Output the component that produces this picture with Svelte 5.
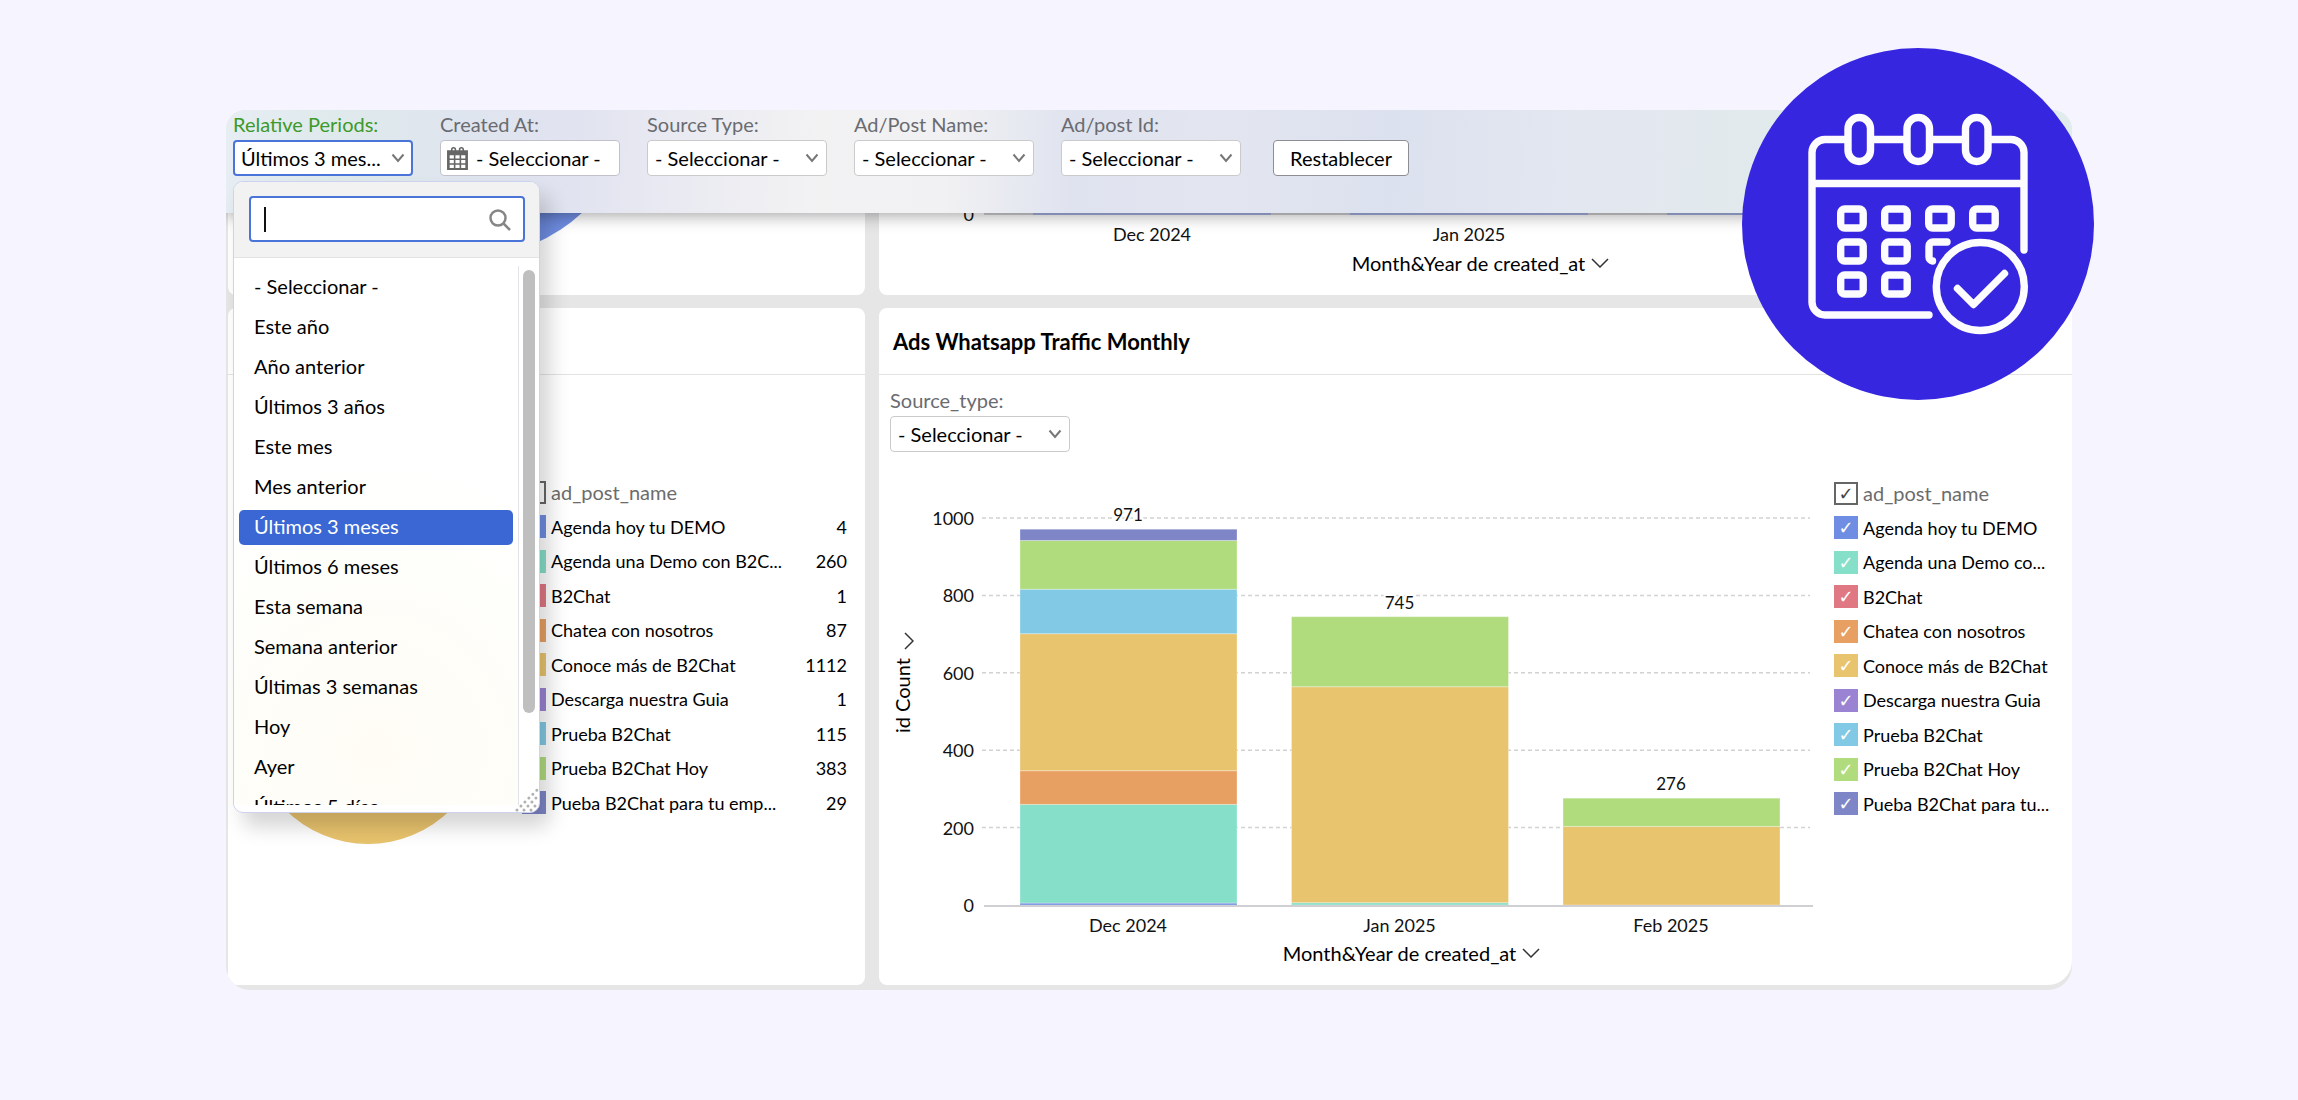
<script>
  const filters = [
    { id: 'relative', label: 'Relative Periods:', value: 'Últimos 3 mes...', active: true },
    { id: 'created', label: 'Created At:', value: '- Seleccionar -', calendar: true },
    { id: 'source', label: 'Source Type:', value: '- Seleccionar -' },
    { id: 'adname', label: 'Ad/Post Name:', value: '- Seleccionar -' },
    { id: 'adid', label: 'Ad/post Id:', value: '- Seleccionar -' },
  ];

  const periods = [
    '- Seleccionar -', 'Este año', 'Año anterior', 'Últimos 3 años', 'Este mes', 'Mes anterior',
    'Últimos 3 meses', 'Últimos 6 meses', 'Esta semana', 'Semana anterior', 'Últimas 3 semanas',
    'Hoy', 'Ayer', 'Últimos 5 días',
  ];
  let selected = $state('Últimos 3 meses');
  let query = $state('');

  // `wide` and `narrow` are the shortened names for the two legend widths
  const series = [
    { name: 'Agenda hoy tu DEMO', total: 4, key: 'c0' },
    { wide: 'Agenda una Demo con B2C...', narrow: 'Agenda una Demo co...', total: 260, key: 'c1' },
    { name: 'B2Chat', total: 1, key: 'c2' },
    { name: 'Chatea con nosotros', total: 87, key: 'c3' },
    { name: 'Conoce más de B2Chat', total: 1112, key: 'c4' },
    { name: 'Descarga nuestra Guia', total: 1, key: 'c5' },
    { name: 'Prueba B2Chat', total: 115, key: 'c6' },
    { name: 'Prueba B2Chat Hoy', total: 383, key: 'c7' },
    { wide: 'Pueba B2Chat para tu emp...', narrow: 'Pueba B2Chat para tu...', total: 29, key: 'c8' },
  ];

  const months = [
    { label: 'Dec 2024', parts: [['c0', 5], ['c1', 255], ['c3', 87], ['c4', 354], ['c6', 115], ['c7', 126], ['c8', 29]] },
    { label: 'Jan 2025', parts: [['c1', 6], ['c4', 558], ['c7', 181]] },
    { label: 'Feb 2025', parts: [['c4', 203], ['c7', 73]] },
  ];

  const baseY = 415;
  const scale = 0.387;
  const bars = months.map((m, i) => {
    let sum = 0;
    const segs = m.parts.map(([key, v]) => {
      sum += v;
      return { key, y: baseY - sum * scale, h: v * scale };
    });
    return { label: m.label, total: sum, x: 96 + i * 271.5, segs, top: baseY - sum * scale };
  });
  const ticks = [1000, 800, 600, 400, 200];
</script>

{#snippet chevron()}
  <svg class="chev" viewBox="0 0 14 10" aria-hidden="true"><path d="M1.5 1.5 7 8 12.5 1.5" /></svg>
{/snippet}

{#snippet axisName()}
  <button class="axis-name" type="button">
    Month&amp;Year de created_at
    <svg viewBox="0 0 18 10" aria-hidden="true"><path d="M1 1 9 9 17 1" /></svg>
  </button>
{/snippet}

<main class="page">
  <div class="stage">
    <section class="board">
      <header class="filters">
        {#each filters as f (f.id)}
          <div class="field">
            <label for={f.id} class:green={f.active}>{f.label}</label>
            <div class="control">
              {#if f.calendar}
                <button id={f.id} class="box date" type="button">
                  <svg class="cal" viewBox="0 0 20 22" aria-hidden="true">
                    <path d="M0 3h20v19H0z" fill="#666" />
                    <path d="M4.5 5V2.500a1.500 1.500 0 0 1 3.500 0V5M12 5V2.500a1.500 1.500 0 0 1 3.500 0V5" fill="none" stroke="#666" stroke-width="1.500" />
                    <path d="M2.500 8h4v3h-4zM8 8h4v3H8zM13.500 8h4v3h-4zM2.500 12.500h4v3h-4zM8 12.500h4v3H8zM13.500 12.500h4v3h-4zM2.500 17h4v3h-4zM8 17h4v3H8zM13.500 17h4v3h-4z" fill="#fff" />
                  </svg>
                  {f.value}
                </button>
              {:else}
                <select id={f.id} class="box" class:active={f.active}><option>{f.value}</option></select>
                {@render chevron()}
              {/if}
            </div>
            {#if f.active}
              <div class="menu">
                <div class="search">
                  <input type="text" aria-label="Buscar" bind:value={query} />
                  <i class="caret"></i>
                  <svg viewBox="0 0 22 22" aria-hidden="true"><circle cx="9" cy="9" r="7.500" /><path d="M14.500 14.500 21 21" /></svg>
                </div>
                <div class="scroller">
                  <ul role="listbox" aria-label="Relative Periods">
                    {#each periods as p}
                      <li role="option" aria-selected={p === selected}>
                        <button type="button" class:on={p === selected} onclick={() => (selected = p)}>{p}</button>
                      </li>
                    {/each}
                  </ul>
                  <div class="track"><div class="thumb"></div></div>
                </div>
                <svg class="grip" viewBox="0 0 24 24" aria-hidden="true">
                  <path d="M2 22 22 2M9 22 22 9M16 22 22 16" />
                </svg>
              </div>
            {/if}
          </div>
        {/each}
        <button class="reset" type="button">Restablecer</button>
      </header>

      <div class="tiles">
        <article class="tile">
          <svg class="pie-top" viewBox="0 0 637 82" preserveAspectRatio="xMinYMin" aria-hidden="true">
            <circle cx="242" cy="-120" r="164" />
          </svg>
        </article>

        <article class="tile upper">
          <svg viewBox="0 0 1193 36" preserveAspectRatio="xMinYMin" aria-hidden="true">
            <text class="tick" x="95" y="8">0</text>
            <path class="base" d="M105 1H1080" />
            <path class="topbars" d="M154 0h238v2H154zM471 0h238v2H471zM788 0h238v2H788z" />
            <text class="month" x="273" y="28">Dec 2024</text>
            <text class="month" x="590" y="28">Jan 2025</text>
            <text class="month" x="907" y="28">Feb 2025</text>
          </svg>
          {@render axisName()}
        </article>

        <article class="tile lower">
          <h2>&nbsp;</h2>
          <div class="pie-body">
            <svg class="pie" viewBox="0 0 234 234" aria-hidden="true"><circle cx="117" cy="117" r="117" /></svg>
            <ul class="legend totals">
              <li class="head"><label><input type="checkbox" checked /><span>ad_post_name</span></label></li>
              {#each series as s}
                <li><label><input type="checkbox" class={s.key} checked /><span>{s.name ?? s.wide}</span></label><b>{s.total}</b></li>
              {/each}
            </ul>
          </div>
        </article>

        <article class="tile lower">
          <h2>Ads Whatsapp Traffic Monthly</h2>
          <div class="field inner">
            <label for="source-inner">Source_type:</label>
            <div class="control">
              <select id="source-inner" class="box"><option>- Seleccionar -</option></select>
              {@render chevron()}
            </div>
          </div>
          <div class="chart-row">
            <button class="y-name" type="button">
              id Count
              <svg viewBox="0 0 10 18" aria-hidden="true"><path d="M9 1 1 9 9 17" /></svg>
            </button>
            <div class="plot">
              <svg viewBox="0 0 910 446" role="img" aria-label="Ads Whatsapp Traffic Monthly">
                {#each ticks as t}
                  <path class="grid" d="M58 {baseY - t * scale}H886" />
                  <text class="tick" x="50" y={baseY - t * scale + 7}>{t}</text>
                {/each}
                <text class="tick" x="50" y={baseY + 7}>0</text>
                {#each bars as b}
                  {#each b.segs as s}
                    <rect class={s.key} x={b.x} y={s.y} width="217" height={s.h} />
                  {/each}
                  <text class="total" x={b.x + 108} y={b.top - 8}>{b.total}</text>
                  <text class="month" x={b.x + 108} y={baseY + 27}>{b.label}</text>
                {/each}
                <path class="base" d="M60 {baseY + 1}H889" />
              </svg>
              {@render axisName()}
            </div>
            <ul class="legend">
              <li class="head"><label><input type="checkbox" checked /><span>ad_post_name</span></label></li>
              {#each series as s}
                <li><label><input type="checkbox" class={s.key} checked /><span>{s.name ?? s.narrow}</span></label></li>
              {/each}
            </ul>
          </div>
        </article>
      </div>
    </section>

    <svg class="badge" viewBox="0 0 352 352" aria-hidden="true">
      <circle cx="176" cy="176" r="176" fill="#3626df" />
      <g fill="none" stroke="#fcfcff" stroke-width="7.400" stroke-linecap="round" stroke-linejoin="round">
        <path d="M102 91.500H83a13 13 0 0 0-13 13V254a13 13 0 0 0 13 13H187M132 91.500h29M191 91.500h29M249 91.500h20a13 13 0 0 1 13 13V202M70 135.500H282" />
        <rect x="106" y="69.500" width="22.500" height="44" rx="11.200" />
        <rect x="165" y="69.500" width="22.500" height="44" rx="11.200" />
        <rect x="223.500" y="69.500" width="22.500" height="44" rx="11.200" />
        <rect x="98.700" y="161" width="22.500" height="19" rx="4" /><rect x="142.700" y="161" width="22.500" height="19" rx="4" />
        <rect x="186.700" y="161" width="22.500" height="19" rx="4" /><rect x="230.700" y="161" width="22.500" height="19" rx="4" />
        <rect x="98.700" y="194" width="22.500" height="19" rx="4" /><rect x="142.700" y="194" width="22.500" height="19" rx="4" />
        <rect x="98.700" y="227" width="22.500" height="19" rx="4" /><rect x="142.700" y="227" width="22.500" height="19" rx="4" />
        <path d="M205 194h-14a4 4 0 0 0-4 4v11a4 4 0 0 0 3.500 4" />
        <circle cx="238.300" cy="238.500" r="44" />
        <path d="M215.500 240.500 231.500 256.500 262.500 225.500" />
      </g>
    </svg>
  </div>
</main>

<style>
  :global(body) { background: #f6f5ff; }
  .page {
    box-sizing: border-box;
    min-height: 100vh;
    padding: 110px 226px;
    font-family: Lato, sans-serif;
    font-size: 20px;
    line-height: 24px;
    color: #000;
    background: #f6f5ff;
  }
  .page *, .page *::before { box-sizing: border-box; }
  button, input, select { font: inherit; color: inherit; margin: 0; }
  ul { list-style: none; margin: 0; padding: 0; }
  .stage { position: relative; }
  .board { background: #e6e6e6; border-radius: 20px 20px 24px 24px; overflow: hidden; }

  .filters {
    position: relative;
    z-index: 2;
    display: flex;
    align-items: flex-start;
    gap: 27px;
    height: 103px;
    padding: 2px 7px 0;
    background: linear-gradient(92deg, #e6edf3 0%, #dfeaec 6%, #dfe5ef 13%, #e1e3f0 19%, #eaebf2 25%, #f2f2f3 32%, #f1f1f3 39%, #dfe3ef 46%, #e3e6f0 54%, #dce1ef 63%, #e3e7f0 73%, #e1eaec 84%, #e1ecec 100%);
    box-shadow: 0 2px 16px rgba(0, 0, 0, 0.38);
  }
  .field { position: relative; width: 180px; }
  .field > label { display: block; color: #6a6b70; line-height: 24px; margin-bottom: 4px; }
  .field > label.green { color: #3d9a2a; }
  .control { position: relative; }
  .box {
    display: block;
    width: 100%;
    height: 36px;
    padding: 0 30px 0 7px;
    border: 1px solid #cacaca;
    border-radius: 4px;
    background: #fff;
    appearance: none;
    text-align: left;
    white-space: nowrap;
  }
  .box.active { border: 2px solid #4a74d8; padding-left: 6px; }
  .date { display: flex; align-items: center; gap: 8px; padding: 0 6px; border-color: #c0c1cb; }
  .cal { width: 21px; height: 23px; flex: none; }
  .chev { position: absolute; right: 8px; top: 13px; width: 14px; height: 10px; pointer-events: none; }
  .chev path { fill: none; stroke: #777; stroke-width: 2; }
  .reset {
    height: 36px;
    width: 136px;
    margin: 28px 0 0 5px;
    padding: 0;
    border: 1px solid #8d8e93;
    border-radius: 4px;
    background: #fff;
  }

  .menu {
    position: absolute;
    z-index: 5;
    left: 0;
    top: 69px;
    width: 307px;
    height: 632px;
    display: flex;
    flex-direction: column;
    border: 1px solid #cdd2ee;
    border-radius: 10px;
    background: #fff;
    box-shadow: 10px 14px 20px rgba(0, 0, 0, 0.17);
    padding-bottom: 7px;
  }
  .search {
    position: relative;
    padding: 14px 14px 15px 15px;
    background: #f2f2f3;
    border-bottom: 1px solid #e3e3e6;
    border-radius: 9px 9px 0 0;
  }
  .search input {
    display: block;
    width: 100%;
    height: 46px;
    border: 2px solid #4a74d8;
    border-radius: 4px;
    background: #fff;
    padding: 0 44px 0 14px;
    outline: none;
  }
  .caret { position: absolute; left: 30px; top: 25px; width: 2px; height: 25px; background: #111; }
  .search svg { position: absolute; right: 28px; top: 27px; width: 22px; height: 22px; fill: none; stroke: #868686; stroke-width: 2.500; }
  .scroller { flex: 1; min-height: 0; display: flex; }
  .scroller ul {
    flex: 1;
    height: 100%;
    overflow: hidden;
    display: flex;
    flex-direction: column;
    gap: 5px;
    padding: 12px 5px 0;
    background: radial-gradient(circle at 50% 90%, #fffcf5, #fefefa 35%, #fff 60%);
  }
  .scroller li { flex: none; }
  .scroller li button {
    display: block;
    width: 100%;
    height: 35px;
    padding: 0 15px 3px;
    border: 0;
    border-radius: 5px;
    background: none;
    text-align: left;
  }
  .scroller li button.on { background: #3b67d4; color: #fff; }
  .track { width: 21px; margin-top: 8px; padding: 4px; border-left: 1px solid #e2e3ea; }
  .thumb { width: 12px; height: 443px; border-radius: 6px; background: #bfbfbf; }
  .grip { position: absolute; right: 0; bottom: 0; width: 24px; height: 24px; }
  .grip path { fill: none; stroke: #b0b0b0; stroke-width: 3; stroke-linecap: round; stroke-dasharray: 0 5.600; }

  .tiles {
    display: grid;
    grid-template-columns: 637fr 1193fr;
    grid-template-rows: 82px auto;
    gap: 13px 14px;
    padding: 0 0 5px 2px;
  }
  .tile { min-width: 0; background: #fff; border-radius: 8px; overflow: hidden; }
  .tile:nth-child(1), .tile:nth-child(2) { border-radius: 0 0 8px 8px; }
  .tile:last-child { border-radius: 8px 0 24px 8px; }
  .pie-top { display: block; width: 100%; }
  .pie-top circle { fill: #6f8de2; }
  .upper { text-align: center; }
  .upper svg { display: block; width: 100%; }
  .topbars { fill: #a5b2e2; }

  h2 {
    margin: 0;
    padding: 0 14px;
    height: 67px;
    line-height: 67px;
    font-size: 22px;
    font-weight: 700;
    color: #000;
    border-bottom: 1px solid #e3e3e3;
  }
  .lower { padding-bottom: 20px; }
  .inner { margin: 13px 0 0 11px; }
  .chart-row { display: flex; align-items: flex-start; margin-top: 23px; }
  .plot {
    flex: 1;
    min-width: 0;
    display: flex;
    flex-direction: column;
    align-items: center;
    margin: 15px 0 0 10px;
  }
  .plot > svg { display: block; width: 100%; }
  .plot rect { stroke: rgba(255, 255, 255, 0.3); stroke-width: 1; }
  .y-name {
    display: flex;
    align-items: center;
    gap: 8px;
    height: 102px;
    width: 24px;
    margin: 156px 0 0 11px;
    padding: 0;
    border: 0;
    background: none;
    writing-mode: vertical-rl;
    rotate: 180deg;
    white-space: nowrap;
  }
  .y-name svg { align-self: flex-end; width: 10px; height: 18px; fill: none; stroke: #333; stroke-width: 1.500; }
  .axis-name {
    display: inline-flex;
    align-items: center;
    gap: 6px;
    margin: 2px 0 0 10px;
    padding: 0;
    border: 0;
    background: none;
    line-height: 24px;
  }
  .plot .axis-name { margin: 5px 0 0 65px; }
  .axis-name svg { display: block; width: 18px; height: 10px; fill: none; stroke: #333; stroke-width: 1.500; }
  text { fill: #111; }
  .tick { text-anchor: end; font-size: 18px; }
  .month { text-anchor: middle; font-size: 18px; }
  .total { text-anchor: middle; font-size: 17px; stroke: #fff; stroke-width: 4; paint-order: stroke; }
  .grid { stroke: #d2d2d2; stroke-width: 1.500; stroke-dasharray: 4 3; }
  .base { stroke: #d0d0d4; stroke-width: 2; }

  .legend {
    flex: none;
    width: 238px;
    height: 335px;
    margin-top: 6px;
    display: flex;
    flex-direction: column;
    justify-content: space-between;
  }
  .legend li { display: flex; align-items: center; justify-content: space-between; font-size: 18px; }
  .legend li.head { font-size: 20px; }
  .legend label { display: flex; align-items: center; gap: 5px; }
  .legend span { white-space: nowrap; }
  .legend b { font-weight: 400; }
  .head { color: #6c6c6c; }
  .legend input {
    appearance: none;
    flex: none;
    width: 24px;
    height: 23px;
    display: grid;
    place-items: center;
    background: #fff;
    color: #fff;
  }
  .head input { border: 2px solid #666; color: #444; }
  .legend .head input { color: #444; }
  .legend input::before { content: '✓'; font: 700 18px/19px 'DejaVu Sans', sans-serif; }
  .pie-body { display: flex; align-items: flex-start; padding: 99px 18px 0 23px; }
  .pie { width: 234px; height: 234px; margin-top: 136px; flex: none; }
  .pie circle { fill: #e8c36d; }
  .legend.totals { margin-left: auto; width: 325px; }
  .c0 { fill: #6f8de2; } .legend input.c0 { background: #6f8de2; }
  .c1 { fill: #86dfc9; } .legend input.c1 { background: #86dfc9; }
  .c2 { fill: #e07884; } .legend input.c2 { background: #e07884; }
  .c3 { fill: #e8a062; } .legend input.c3 { background: #e8a062; }
  .c4 { fill: #e9c46e; } .legend input.c4 { background: #e9c46e; }
  .c5 { fill: #9a83d3; } .legend input.c5 { background: #9a83d3; }
  .c6 { fill: #81c9e4; } .legend input.c6 { background: #81c9e4; }
  .c7 { fill: #b1dc7e; } .legend input.c7 { background: #b1dc7e; }
  .c8 { fill: #7e86c8; } .legend input.c8 { background: #7e86c8; }

  .badge { position: absolute; z-index: 8; right: -22px; top: -62px; width: 352px; height: 352px; }
</style>
